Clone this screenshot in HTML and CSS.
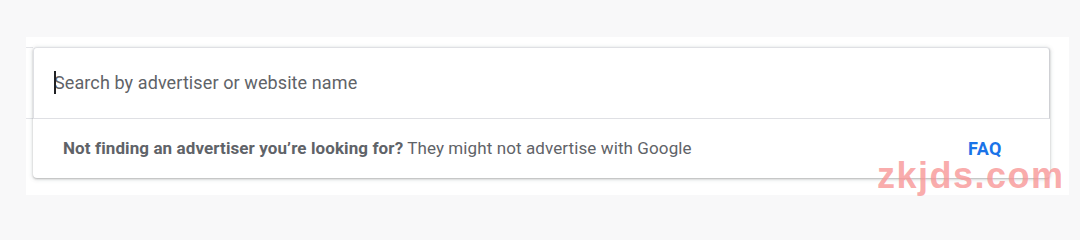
FILE: index.html
```html
<!DOCTYPE html>
<html lang="en">
<head>
<meta charset="utf-8">
<title>Ads Transparency search</title>
<link rel="stylesheet" href="styles.css">
</head>
<body>
<div class="panel">
  <div class="stub"></div>
  <div class="card">
    <div class="search">
      <span class="caret"></span><span class="placeholder">Search by advertiser or website name</span>
    </div>
    <div class="hint">
      <p class="hint-text"><strong>Not finding an advertiser you’re looking for?</strong> They might not advertise with Google</p>
      <a class="faq" href="#">FAQ</a>
    </div>
  </div>
</div>
<div class="watermark">zkjds.com</div>
</body>
</html>
```
FILE: styles.css
```css
html, body {
  margin: 0;
  padding: 0;
}
body {
  background: #f8f8f9;
  padding: 37px 0 0 26px;
  font-family: Roboto, "Liberation Sans", Arial, sans-serif;
  height: 214px;
  box-sizing: border-box;
  overflow: hidden;
  position: relative;
}
.panel {
  width: 1043px;
  height: 158px;
  background: #fff;
  box-sizing: border-box;
  padding-top: 10px;
  display: flex;
  align-items: flex-start;
}
.stub {
  width: 7px;
  height: 72px;
  box-sizing: border-box;
  border-top: 1px solid #e3e4e8;
  border-bottom: 1px solid #e3e4e8;
}
.card {
  width: 1017px;
  height: 131px;
  background: #fff;
  border-radius: 4px;
  box-shadow: 0 1px 2px rgba(60, 64, 67, 0.3), 0 1px 4px 1px rgba(60, 64, 67, 0.12);
  display: flex;
  flex-direction: column;
}
.search {
  height: 72px;
  box-sizing: border-box;
  border: 1px solid #dfe0e4;
  border-right-color: #cfd0d4;
  border-radius: 4px 4px 0 0;
  display: flex;
  align-items: center;
  padding-left: 20px;
  padding-bottom: 1px;
}
.caret {
  display: inline-block;
  width: 2px;
  height: 23px;
  background: #202124;
  margin-right: -2px;
  position: relative;
  z-index: 1;
}
.placeholder {
  font-size: 18px;
  color: #5f6368;
  letter-spacing: 0.1px;
}
.hint {
  flex: 1;
  display: flex;
  align-items: center;
  justify-content: space-between;
  padding: 0 48px 1px 30px;
}
.hint-text {
  margin: 0;
  font-size: 17px;
  color: #5f6368;
  letter-spacing: 0.1px;
}
.hint-text strong {
  font-weight: 700;
}
.faq {
  font-size: 18px;
  font-weight: 700;
  color: #1a73e8;
  text-decoration: none;
  letter-spacing: 0.5px;
}
.watermark {
  position: absolute;
  left: 877px;
  top: 162px;
  font-family: "Liberation Sans", Arial, sans-serif;
  font-weight: 700;
  font-size: 36px;
  letter-spacing: 1.5px;
  color: rgba(248, 150, 150, 0.8);
  line-height: 0.8;
}
```
